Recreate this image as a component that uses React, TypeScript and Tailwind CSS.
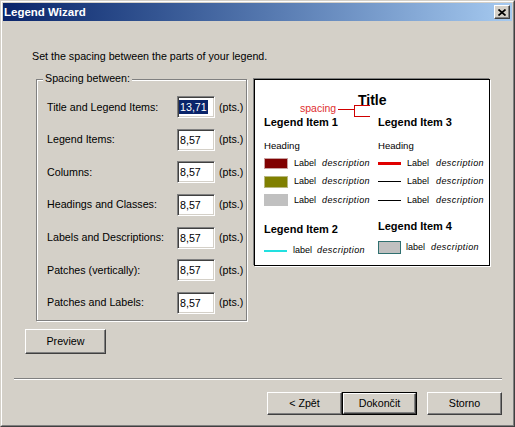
import React from "react";

const raised =
  "bg-[#d4d0c8] border border-t-white border-l-white border-r-[#404040] border-b-[#404040] shadow-[inset_-1px_-1px_0_#808080,inset_1px_1px_0_#d4d0c8]";

const sunken =
  "bg-white border border-t-[#808080] border-l-[#808080] border-r-white border-b-white shadow-[inset_1px_1px_0_#404040,inset_-1px_-1px_0_#d4d0c8]";

const rows = [
  { label: "Title and Legend Items:", value: "13,71", selected: true },
  { label: "Legend Items:", value: "8,57" },
  { label: "Columns:", value: "8,57" },
  { label: "Headings and Classes:", value: "8,57" },
  { label: "Labels and Descriptions:", value: "8,57" },
  { label: "Patches (vertically):", value: "8,57" },
  { label: "Patches and Labels:", value: "8,57" },
];

function LegendRow({
  swatch,
  label,
  gap1,
  gap2,
}: {
  swatch: React.ReactNode;
  label: string;
  gap1: string;
  gap2: string;
}) {
  return (
    <div className="h-[18.5px] flex items-center text-[9px] leading-[11px]">
      {swatch}
      <span className={gap1}>{label}</span>
      <span className={`${gap2} italic tracking-[0.4px]`}>description</span>
    </div>
  );
}

export default function App() {
  return (
    <div className="w-[515px] h-[427px] overflow-hidden bg-[#d4d0c8] border border-t-[#d4d0c8] border-l-[#d4d0c8] border-r-[#404040] border-b-[#404040] font-['Liberation_Sans',Arial,sans-serif] text-[10.7px] text-black">
      <div className="h-full flex flex-col border border-t-white border-l-white border-r-[#808080] border-b-[#808080] p-px">
        {/* Title bar */}
        <div className="h-[18px] shrink-0 flex items-center bg-linear-to-r from-[#0a246a] to-[#a6caf0] pl-px pr-[2px]">
          <span className="flex-1 text-white font-bold text-[11.5px] leading-[14px]">
            Legend Wizard
          </span>
          <div className={`${raised} w-[16px] h-[14px] flex items-center justify-center`}>
            <svg width="8" height="7" viewBox="0 0 8 7">
              <path d="M0.5 0.5 L7.5 6.5 M7.5 0.5 L0.5 6.5" stroke="black" strokeWidth="1.7" />
            </svg>
          </div>
        </div>

        {/* Body */}
        <div className="flex-1 flex flex-col">
          <div className="mt-[29px] pl-[29px] leading-[13px]">
            Set the spacing between the parts of your legend.
          </div>

          <div className="mt-[16px] pl-[33px] flex items-start">
            {/* Group box */}
            <div className="relative w-[211px] h-[242px] border border-[#808080] shadow-[inset_1px_1px_0_#fff,1px_1px_0_#fff]">
              <span className="absolute left-[6px] top-[-8px] px-[2px] bg-[#d4d0c8] leading-[13px]">
                Spacing between:
              </span>
              <div className="pt-[16px] pl-[10px] flex flex-col gap-[10.67px]">
                {rows.map((r) => (
                  <div key={r.label} className="h-[22px] flex items-center">
                    <span className="w-[130px] leading-[13px]">{r.label}</span>
                    <div className={`${sunken} w-[38px] h-[22px] flex items-center pl-px`}>
                      {r.selected ? (
                        <span className="bg-[#0a246a] text-white leading-[14px] px-px">
                          {r.value}
                        </span>
                      ) : (
                        <span className="leading-[14px] px-px">{r.value}</span>
                      )}
                    </div>
                    <span className="ml-[4px] leading-[13px]">(pts.)</span>
                  </div>
                ))}
              </div>
            </div>

            {/* Preview */}
            <div className="relative ml-[7px] w-[236px] h-[187px] bg-white border border-black shadow-[-1px_-1px_0_#808080,1px_1px_0_#fff]">
              <div className="pt-[12px] pl-[103px] text-[14px] leading-[16px] font-bold">
                Title
              </div>

              <div className="mt-[8px] pl-[9px] flex">
                {/* column 1 */}
                <div className="w-[114px] flex flex-col">
                  <div className="text-[11px] leading-[13px] font-bold">Legend Item 1</div>
                  <div className="mt-[11px] text-[9.6px] leading-[12px]">Heading</div>
                  <div className="mt-[2px]">
                    <LegendRow
                      swatch={<div className="w-[24px] h-[11px] bg-[#800000] border border-[#c8a0a0]" />}
                      label="Label"
                      gap1="ml-[6px]"
                      gap2="ml-[6px]"
                    />
                    <LegendRow
                      swatch={<div className="w-[24px] h-[12px] bg-[#808000] border border-[#b8b880]" />}
                      label="Label"
                      gap1="ml-[6px]"
                      gap2="ml-[6px]"
                    />
                    <LegendRow
                      swatch={<div className="w-[24px] h-[12px] bg-[#c0c0c0]" />}
                      label="Label"
                      gap1="ml-[6px]"
                      gap2="ml-[6px]"
                    />
                  </div>
                  <div className="mt-[13px] text-[11px] leading-[13px] font-bold">Legend Item 2</div>
                  <div className="mt-[6px]">
                    <LegendRow
                      swatch={<div className="w-[23px] h-[1.5px] bg-[#22e0e0]" />}
                      label="label"
                      gap1="ml-[6px]"
                      gap2="ml-[5px]"
                    />
                  </div>
                </div>

                {/* column 2 */}
                <div className="flex flex-col">
                  <div className="text-[11px] leading-[13px] font-bold">Legend Item 3</div>
                  <div className="mt-[11px] text-[9.6px] leading-[12px]">Heading</div>
                  <div className="mt-[2px]">
                    <LegendRow
                      swatch={<div className="w-[23px] h-[3px] bg-[#e00000]" />}
                      label="Label"
                      gap1="ml-[6px]"
                      gap2="ml-[7px]"
                    />
                    <LegendRow
                      swatch={<div className="w-[23px] h-px bg-black" />}
                      label="Label"
                      gap1="ml-[6px]"
                      gap2="ml-[7px]"
                    />
                    <LegendRow
                      swatch={<div className="w-[23px] h-px bg-black" />}
                      label="Label"
                      gap1="ml-[6px]"
                      gap2="ml-[7px]"
                    />
                  </div>
                  <div className="mt-[10px] text-[11px] leading-[13px] font-bold">Legend Item 4</div>
                  <div className="mt-[6px]">
                    <LegendRow
                      swatch={<div className="w-[23px] h-[13px] bg-[#c0c0c0] border border-[#307070]" />}
                      label="label"
                      gap1="ml-[5px]"
                      gap2="ml-[6px]"
                    />
                  </div>
                </div>
              </div>

              {/* spacing annotation */}
              <span className="absolute left-[45px] top-[22px] text-[10.5px] leading-[12px] text-[#e03030]">
                spacing
              </span>
              <svg
                className="absolute left-0 top-0"
                width="234"
                height="185"
                viewBox="0 0 234 185"
                shapeRendering="crispEdges"
              >
                <path
                  d="M83 29.5 H99 M99.5 25 V37 M99 25.5 H115 M99 36.5 H115"
                  stroke="#d00000"
                  strokeWidth="1"
                  fill="none"
                />
              </svg>
            </div>
          </div>

          {/* Preview button */}
          <div className="mt-[8px] ml-[22px]">
            <div className={`${raised} w-[81px] h-[25px] flex items-center justify-center leading-[13px]`}>
              Preview
            </div>
          </div>

          {/* Separator */}
          <div className="mt-[24px] ml-[11px] w-[488px] h-[2px] border-t border-t-[#808080] border-b border-b-white" />

          {/* Buttons */}
          <div className="mt-[12px] pl-[264px] flex">
            <div className={`${raised} w-[75px] h-[23px] flex items-center justify-center leading-[13px]`}>
              &lt; Zpět
            </div>
            <div className="w-[75px] h-[23px] border border-black">
              <div className={`${raised} w-full h-full flex items-center justify-center leading-[13px]`}>
                Dokončit
              </div>
            </div>
            <div className={`${raised} ml-[10px] w-[75px] h-[23px] flex items-center justify-center leading-[13px]`}>
              Storno
            </div>
          </div>
        </div>
      </div>
    </div>
  );
}
